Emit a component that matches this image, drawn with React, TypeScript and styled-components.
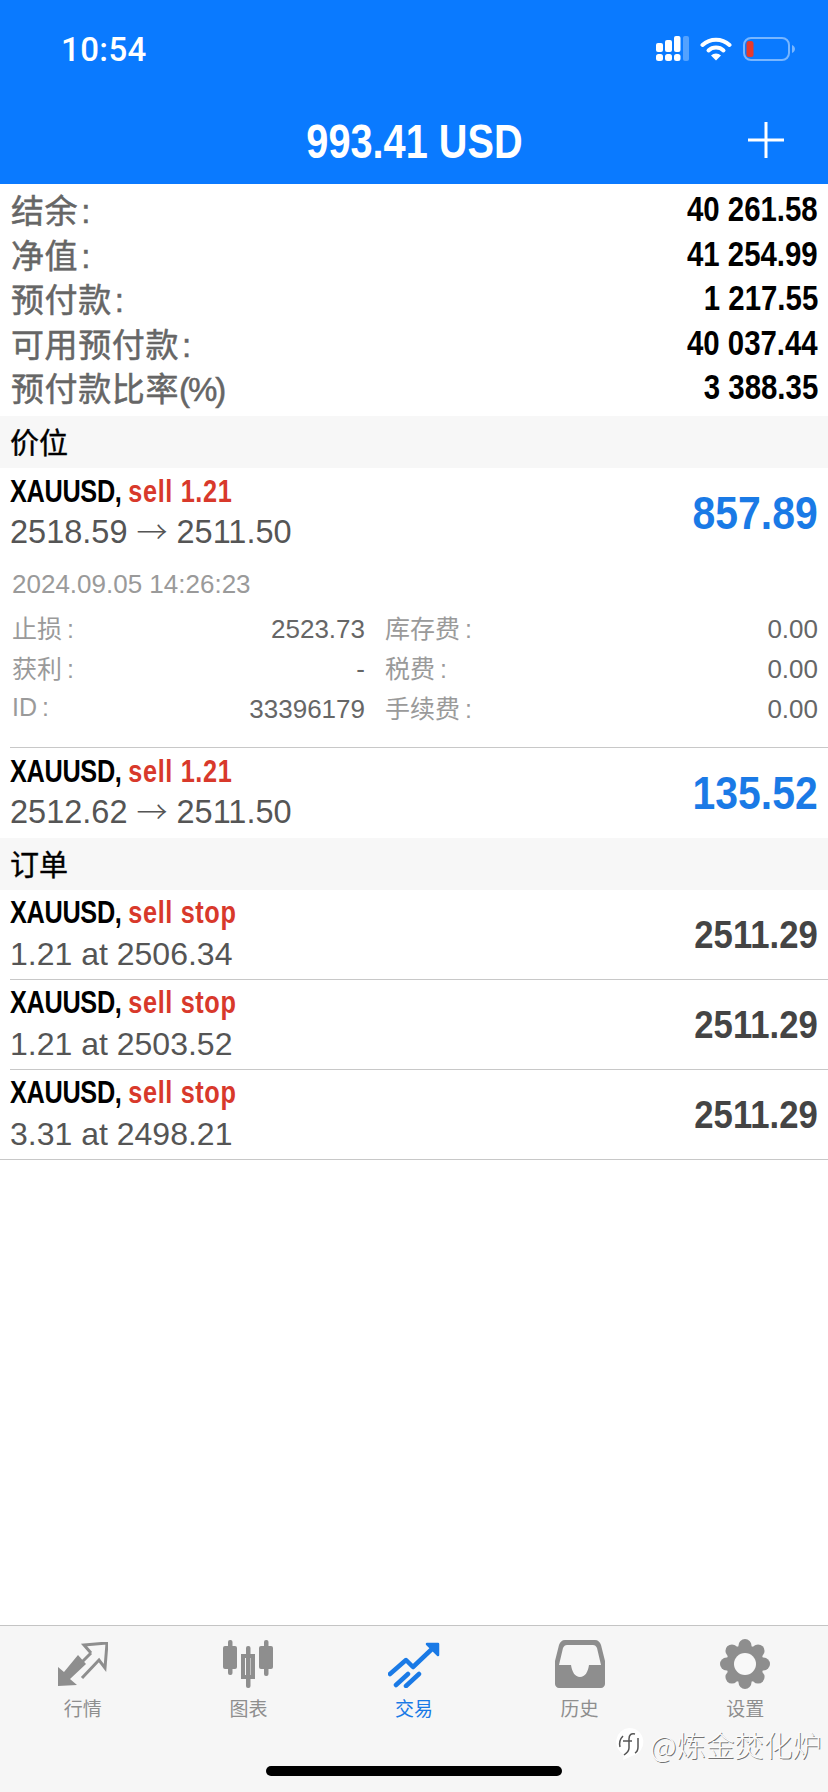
import React from "react";
import styled, { createGlobalStyle } from "styled-components";

const GlobalStyle = createGlobalStyle`
  html, body {
    margin: 0;
    padding: 0;
    background: #fff;
    font-family: "Liberation Sans", "Noto Sans CJK SC", sans-serif;
  }
`;

const GREY_TEXT = "#555";
const TAB_GREY = "#8e8e8e";
const BLUE = "#1a7ae6";

const Screen = styled.div`
  position: relative;
  width: 828px;
  height: 1792px;
  display: flex;
  flex-direction: column;
  overflow: hidden;
  background: #fff;
`;

const Header = styled.header`
  height: 184px;
  flex: none;
  background: #0a7aff;
  color: #fff;
`;

const StatusBar = styled.div`
  display: flex;
  align-items: center;
  justify-content: space-between;
  height: 32px;
  padding: 33px 33px 0 61px;
`;

const Clock = styled.span`
  font-family: Roboto, sans-serif;
  font-weight: 500;
  font-size: 33px;
  letter-spacing: 0.4px;
`;

const StatusIcons = styled.div`
  display: flex;
  align-items: center;
  gap: 11px;
`;

const TitleBar = styled.div`
  position: relative;
  margin-top: 46px;
  display: flex;
  justify-content: center;
`;

// Bold figures on this screen are a condensed cut, so they get squeezed sideways
const Condensed = styled.span<{ $x: number; $origin: "left" | "center" | "right" }>`
  display: inline-block;
  white-space: nowrap;
  font-weight: 700;
  transform: scaleX(${(p) => p.$x});
  transform-origin: ${(p) => p.$origin} center;
`;

const Title = styled.h1`
  margin: 0;
  font-size: 49px;
  line-height: 60px;
`;

const AddButton = styled.svg`
  position: absolute;
  right: 44px;
  top: 11px;
`;

const Summary = styled.section`
  height: 232px;
  flex: none;
  box-sizing: border-box;
  padding: 3px 10px 0 11px;
`;

const SummaryRow = styled.div`
  display: flex;
  justify-content: space-between;
  align-items: center;
  height: 44.5px;
`;

const SummaryLabel = styled.span`
  font-size: 33px;
  letter-spacing: 0.6px;
  color: #666;
  -webkit-text-stroke: 0.5px #666;
`;

const LabelColon = styled.span`
  margin-left: 3px;
`;

const TightSuffix = styled.span`
  letter-spacing: -2px;
`;

const SummaryValue = styled(Condensed)`
  font-size: 35px;
  color: #000;
`;

const SectionBand = styled.div`
  height: 52px;
  flex: none;
  box-sizing: border-box;
  padding: 0 0 2px 10px;
  background: #f7f7f7;
  display: flex;
  align-items: center;
  font-size: 29px;
  color: #000;
  -webkit-text-stroke: 0.4px #000;
`;

const TradeRow = styled.div<{ $height: number }>`
  height: ${(p) => p.$height}px;
  flex: none;
  box-sizing: border-box;
  padding: 0 10px;
  display: flex;
  justify-content: space-between;
  align-items: center;
`;

const TradeText = styled.div`
  display: flex;
  flex-direction: column;
  gap: 3px;
  padding-bottom: 3px;
`;

const Symbol = styled(Condensed)`
  font-size: 32px;
  line-height: 38px;
  letter-spacing: -0.4px;
  color: #000;
`;

const Side = styled.span`
  color: #d8392b;
  letter-spacing: 0.8px;
`;

const PriceLine = styled.div`
  font-size: 32.5px;
  line-height: 38px;
  color: ${GREY_TEXT};
`;

const OrderLine = styled(PriceLine)`
  font-size: 32px;
  margin-top: 1px;
`;

const Arrow = styled.span`
  font-family: "Noto Sans CJK SC", sans-serif;
  font-weight: 300;
  font-size: 31px;
  line-height: 1;
`;

const ProfitAmount = styled(Condensed)`
  font-size: 46px;
  color: ${BLUE};
`;

const OrderAmount = styled(Condensed)`
  font-size: 39px;
  color: #444;
`;

const Details = styled.div`
  height: 189px;
  flex: none;
  box-sizing: border-box;
  padding: 11px 10px 0 12px;
`;

const OpenTime = styled.div`
  font-size: 26px;
  line-height: 30px;
  color: #9a9a9a;
`;

const DetailGrid = styled.div`
  display: grid;
  grid-template-columns: 353px 433px;
  column-gap: 20px;
  grid-auto-rows: 40px;
  margin-top: 10px;
`;

const DetailCell = styled.div`
  display: flex;
  align-items: center;
  justify-content: space-between;
`;

const DetailLabel = styled.span`
  font-size: 25px;
  margin-bottom: 4px;
  color: #9a9a9a;
`;

const DetailValue = styled.span`
  font-size: 26px;
  color: #666;
`;

const Divider = styled.div<{ $full?: boolean }>`
  height: 1px;
  flex: none;
  margin-left: ${(p) => (p.$full ? 0 : "10px")};
  background: #c8c8c8;
`;

const Spacer = styled.div`
  flex: 1;
`;

const TabBar = styled.nav`
  height: 167px;
  flex: none;
  box-sizing: border-box;
  border-top: 1px solid #c4c4c4;
  background: #f6f6f6;
  display: grid;
  grid-template-columns: repeat(5, 1fr);
  align-items: start;
`;

const Tab = styled.div<{ $active?: boolean }>`
  display: flex;
  flex-direction: column;
  align-items: center;
  padding-top: 12px;
  color: ${(p) => (p.$active ? BLUE : TAB_GREY)};
  font-family: "Noto Sans CJK SC", sans-serif;
  font-size: 19px;
`;

const TabIcon = styled.div`
  height: 52px;
  display: flex;
  align-items: center;
  justify-content: center;
`;

const TabLabel = styled.span`
  margin-top: 6px;
  line-height: 24px;
`;

const HomeIndicator = styled.div`
  position: absolute;
  left: 266px;
  bottom: 16px;
  width: 296px;
  height: 10px;
  border-radius: 5px;
  background: #000;
`;

const Watermark = styled.div`
  position: absolute;
  left: 614px;
  top: 1727px;
  display: flex;
  align-items: center;
  gap: 6px;
  white-space: nowrap;
  font-family: "Noto Sans CJK SC", sans-serif;
  font-weight: 300;
  font-size: 29px;
  line-height: 32px;
  color: #fbfbfb;
  text-shadow: 1px 1px 0 rgba(0, 0, 0, 0.55);
`;

const SignalIcon = () => (
  <svg width="33" height="26" viewBox="0 0 33 26" fill="#fff">
    <rect x="0" y="7" width="7" height="9" rx="2" />
    <rect x="0" y="18" width="7" height="7" rx="2.500" />
    <rect x="9" y="4" width="7" height="12" rx="2" />
    <rect x="9" y="18" width="7" height="7" rx="2.500" />
    <rect x="18" y="0" width="6.500" height="16" rx="2" />
    <rect x="18" y="18" width="6.500" height="7" rx="2.500" />
    <rect x="27" y="0" width="6" height="25" rx="2" opacity="0.3" />
  </svg>
);

const WifiIcon = () => (
  <svg width="32" height="24" viewBox="0 0 32 24" fill="none" stroke="#fff" strokeLinecap="round">
    <path d="M2.500 8a20 20 0 0 1 27 0" strokeWidth="4" />
    <path d="M8.500 13.500a11 11 0 0 1 15 0" strokeWidth="4" />
    <path d="M16 23.500l-5-5a7 7 0 0 1 10 0z" fill="#fff" stroke="none" />
  </svg>
);

const BatteryIcon = () => (
  <svg width="52" height="24" viewBox="0 0 52 24">
    <rect x="1" y="1" width="45" height="22" rx="7" fill="none" stroke="#fff" strokeOpacity="0.45" strokeWidth="2" />
    <rect x="3.500" y="4" width="7" height="16" rx="2.500" fill="#e8392b" />
    <path d="M49 8c2 1 3 2.500 3 4s-1 3-3 4z" fill="#fff" fillOpacity="0.45" />
  </svg>
);

const QuotesIcon = () => (
  <svg width="50" height="44" viewBox="0 0 50 44" fill={TAB_GREY}>
    <path d="M0 25V44L19 43L12 37L28 22L20 13L6 30z" />
    <path
      d="M33 11L26 3L49 1L47 26L41 18L24 36M33 11L21 23"
      fill="none"
      stroke={TAB_GREY}
      strokeWidth="3"
    />
  </svg>
);

const ChartIcon = () => (
  <svg width="50" height="48" viewBox="0 0 50 48" fill={TAB_GREY}>
    <rect x="5" y="0" width="4.500" height="35" rx="2" />
    <rect x="0" y="6" width="14" height="23" rx="2" />
    <rect x="23" y="6" width="4.500" height="42" rx="2" />
    <path d="M18 14h14v25H18z M22 18v17h6V18z" fillRule="evenodd" />
    <rect x="41" y="0" width="4.500" height="36" rx="2" />
    <rect x="36" y="6" width="14" height="23" rx="2" />
  </svg>
);

const TradeIcon = () => (
  <svg width="52" height="47" viewBox="0 0 52 47" fill="none" stroke={BLUE} strokeWidth="4.500" strokeLinecap="round" strokeLinejoin="round">
    <path d="M2 33L18 19L25 26L45 7" />
    <path d="M8 44L20 33" />
    <path d="M18 45L31 33" />
    <path d="M39 3H50V14z" fill={BLUE} strokeWidth="2.500" />
  </svg>
);

const HistoryIcon = () => (
  <svg width="50" height="48" viewBox="0 0 50 48">
    <path
      fill={TAB_GREY}
      fillRule="evenodd"
      d="M10 0H40c3 0 5 2 6 5l4 16v23c0 2-2 4-4 4H4c-2 0-4-2-4-4V21L4 5C5 2 7 0 10 0zM12 5c-2 0-3 1-4 3L4 25h12c1 7 4 12 9 12s8-5 9-12h12L42 8c-1-2-2-3-4-3z"
    />
  </svg>
);

// Gear is a disc with eight round teeth around it and a light hub on top
const GEAR_TEETH = [0, 45, 90, 135, 180, 225, 270, 315];

const GearIcon = () => (
  <svg width="50" height="50" viewBox="0 0 50 50" fill={TAB_GREY}>
    <circle cx="25" cy="25" r="19" />
    {GEAR_TEETH.map((deg) => (
      <circle
        key={deg}
        cx={25 + 18.5 * Math.sin((deg * Math.PI) / 180)}
        cy={25 - 18.5 * Math.cos((deg * Math.PI) / 180)}
        r="6.500"
      />
    ))}
    <circle cx="25" cy="25" r="11" fill="#f8f8f8" />
  </svg>
);

const WatermarkLogo = () => (
  <svg width="30" height="34" viewBox="0 0 30 34">
    <path d="M15 1a14 14 0 0 1 4 27.500L9 33l1-5.500A14 14 0 0 1 15 1z" fill="#fff" />
    <path
      d="M21 7c-4-1-6 1-6 5v9c0 3-2 5-5 7M9 14h9M24 11v9c0 3-1 5-3 6M6 20c-1-4 0-8 3-11"
      fill="none"
      stroke="#555"
      strokeWidth="1.500"
    />
  </svg>
);

const summary: [React.ReactNode, string][] = [
  [
    <>
      结余<LabelColon>:</LabelColon>
    </>,
    "40 261.58",
  ],
  [
    <>
      净值<LabelColon>:</LabelColon>
    </>,
    "41 254.99",
  ],
  [
    <>
      预付款<LabelColon>:</LabelColon>
    </>,
    "1 217.55",
  ],
  [
    <>
      可用预付款<LabelColon>:</LabelColon>
    </>,
    "40 037.44",
  ],
  [
    <>
      预付款比率<TightSuffix>(%)</TightSuffix>
    </>,
    "3 388.35",
  ],
];

const details: [string, string][] = [
  ["止损\u2009:", "2523.73"],
  ["库存费\u2009:", "0.00"],
  ["获利\u2009:", "-"],
  ["税费\u2009:", "0.00"],
  ["ID\u2009:", "33396179"],
  ["手续费\u2009:", "0.00"],
];

const orders = [
  { line: "1.21 at 2506.34", full: false },
  { line: "1.21 at 2503.52", full: false },
  { line: "3.31 at 2498.21", full: true },
];

const PositionRow = ({ open, amount }: { open: string; amount: string }) => (
  <TradeRow $height={90}>
    <TradeText>
      <Symbol $x={0.79} $origin="left">
        XAUUSD, <Side>sell 1.21</Side>
      </Symbol>
      <PriceLine>
        {open} <Arrow>→</Arrow> 2511.50
      </PriceLine>
    </TradeText>
    <ProfitAmount $x={0.89} $origin="right">
      {amount}
    </ProfitAmount>
  </TradeRow>
);

const OrderRow = ({ line }: { line: string }) => (
  <TradeRow $height={89}>
    <TradeText>
      <Symbol $x={0.79} $origin="left">
        XAUUSD, <Side>sell stop</Side>
      </Symbol>
      <OrderLine>{line}</OrderLine>
    </TradeText>
    <OrderAmount $x={0.89} $origin="right">
      2511.29
    </OrderAmount>
  </TradeRow>
);

const App = () => (
  <Screen>
    <GlobalStyle />
    <Header>
      <StatusBar>
        <Clock>10:54</Clock>
        <StatusIcons>
          <SignalIcon />
          <WifiIcon />
          <BatteryIcon />
        </StatusIcons>
      </StatusBar>
      <TitleBar>
        <Title>
          <Condensed $x={0.81} $origin="center">
            993.41 USD
          </Condensed>
        </Title>
        <AddButton width="36" height="36" viewBox="0 0 36 36" stroke="#fff" strokeWidth="3">
          <path d="M18 0v36M0 18h36" />
        </AddButton>
      </TitleBar>
    </Header>

    <Summary>
      {summary.map(([label, value]) => (
        <SummaryRow key={value}>
          <SummaryLabel>{label}</SummaryLabel>
          <SummaryValue $x={0.84} $origin="right">
            {value}
          </SummaryValue>
        </SummaryRow>
      ))}
    </Summary>

    <SectionBand>价位</SectionBand>
    <PositionRow open="2518.59" amount="857.89" />
    <Details>
      <OpenTime>2024.09.05 14:26:23</OpenTime>
      <DetailGrid>
        {details.map(([label, value]) => (
          <DetailCell key={label}>
            <DetailLabel>{label}</DetailLabel>
            <DetailValue>{value}</DetailValue>
          </DetailCell>
        ))}
      </DetailGrid>
    </Details>
    <Divider />
    <PositionRow open="2512.62" amount="135.52" />

    <SectionBand>订单</SectionBand>
    {orders.map((o) => (
      <React.Fragment key={o.line}>
        <OrderRow line={o.line} />
        <Divider $full={o.full} />
      </React.Fragment>
    ))}

    <Spacer />
    <TabBar>
      <Tab>
        <TabIcon>
          <QuotesIcon />
        </TabIcon>
        <TabLabel>行情</TabLabel>
      </Tab>
      <Tab>
        <TabIcon>
          <ChartIcon />
        </TabIcon>
        <TabLabel>图表</TabLabel>
      </Tab>
      <Tab $active>
        <TabIcon>
          <TradeIcon />
        </TabIcon>
        <TabLabel>交易</TabLabel>
      </Tab>
      <Tab>
        <TabIcon>
          <HistoryIcon />
        </TabIcon>
        <TabLabel>历史</TabLabel>
      </Tab>
      <Tab>
        <TabIcon>
          <GearIcon />
        </TabIcon>
        <TabLabel>设置</TabLabel>
      </Tab>
    </TabBar>
    <HomeIndicator />
    <Watermark>
      <WatermarkLogo />
      @炼金焚化炉
    </Watermark>
  </Screen>
);

export default App;
